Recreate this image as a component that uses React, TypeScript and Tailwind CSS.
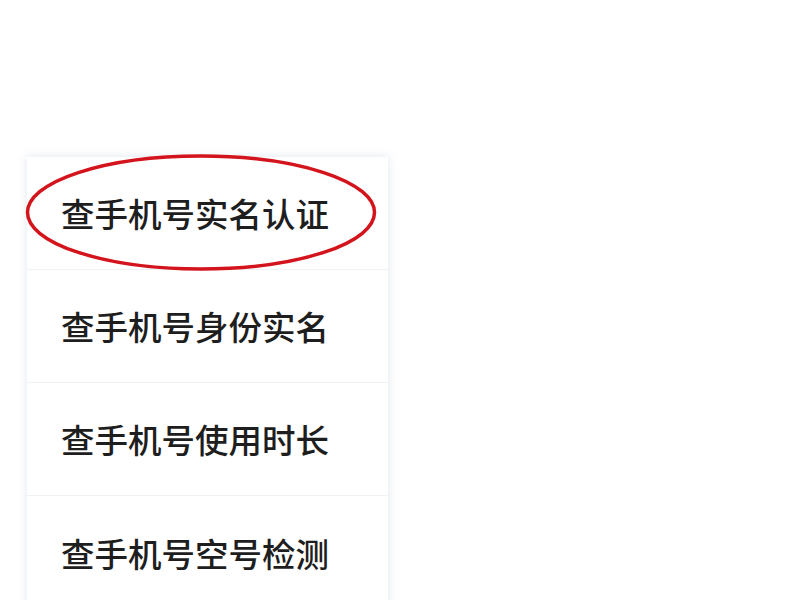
const ITEMS = ['查手机号实名认证', '查手机号身份实名', '查手机号使用时长', '查手机号空号检测'];

export default function App() {
  return (
    <div className="w-[800px] h-[600px] bg-white overflow-hidden" style={{ fontFamily: '"Noto Sans CJK SC", "Noto Sans", sans-serif' }}>
      <div className="relative ml-[27px] mt-[157px] w-[361px] bg-white shadow-[0_0_9px_rgba(120,140,170,0.22)]">
        {ITEMS.map((t, i) => (
          <div key={t} className={`h-[113px] flex items-center pl-[34px] ${i < ITEMS.length - 1 ? 'border-b border-[#f0f2f5]' : ''}`}>
            <span className="text-[33.5px] leading-none font-medium text-[#1e1e1e]">{t}</span>
          </div>
        ))}
        <svg className="absolute left-[-2px] top-[-4px] pointer-events-none" width="352" height="119" viewBox="0 0 352 119">
          <ellipse cx="176" cy="59.5" rx="173.5" ry="56.5" fill="none" stroke="#d4141c" strokeWidth="3.5" />
        </svg>
      </div>
    </div>
  );
}
